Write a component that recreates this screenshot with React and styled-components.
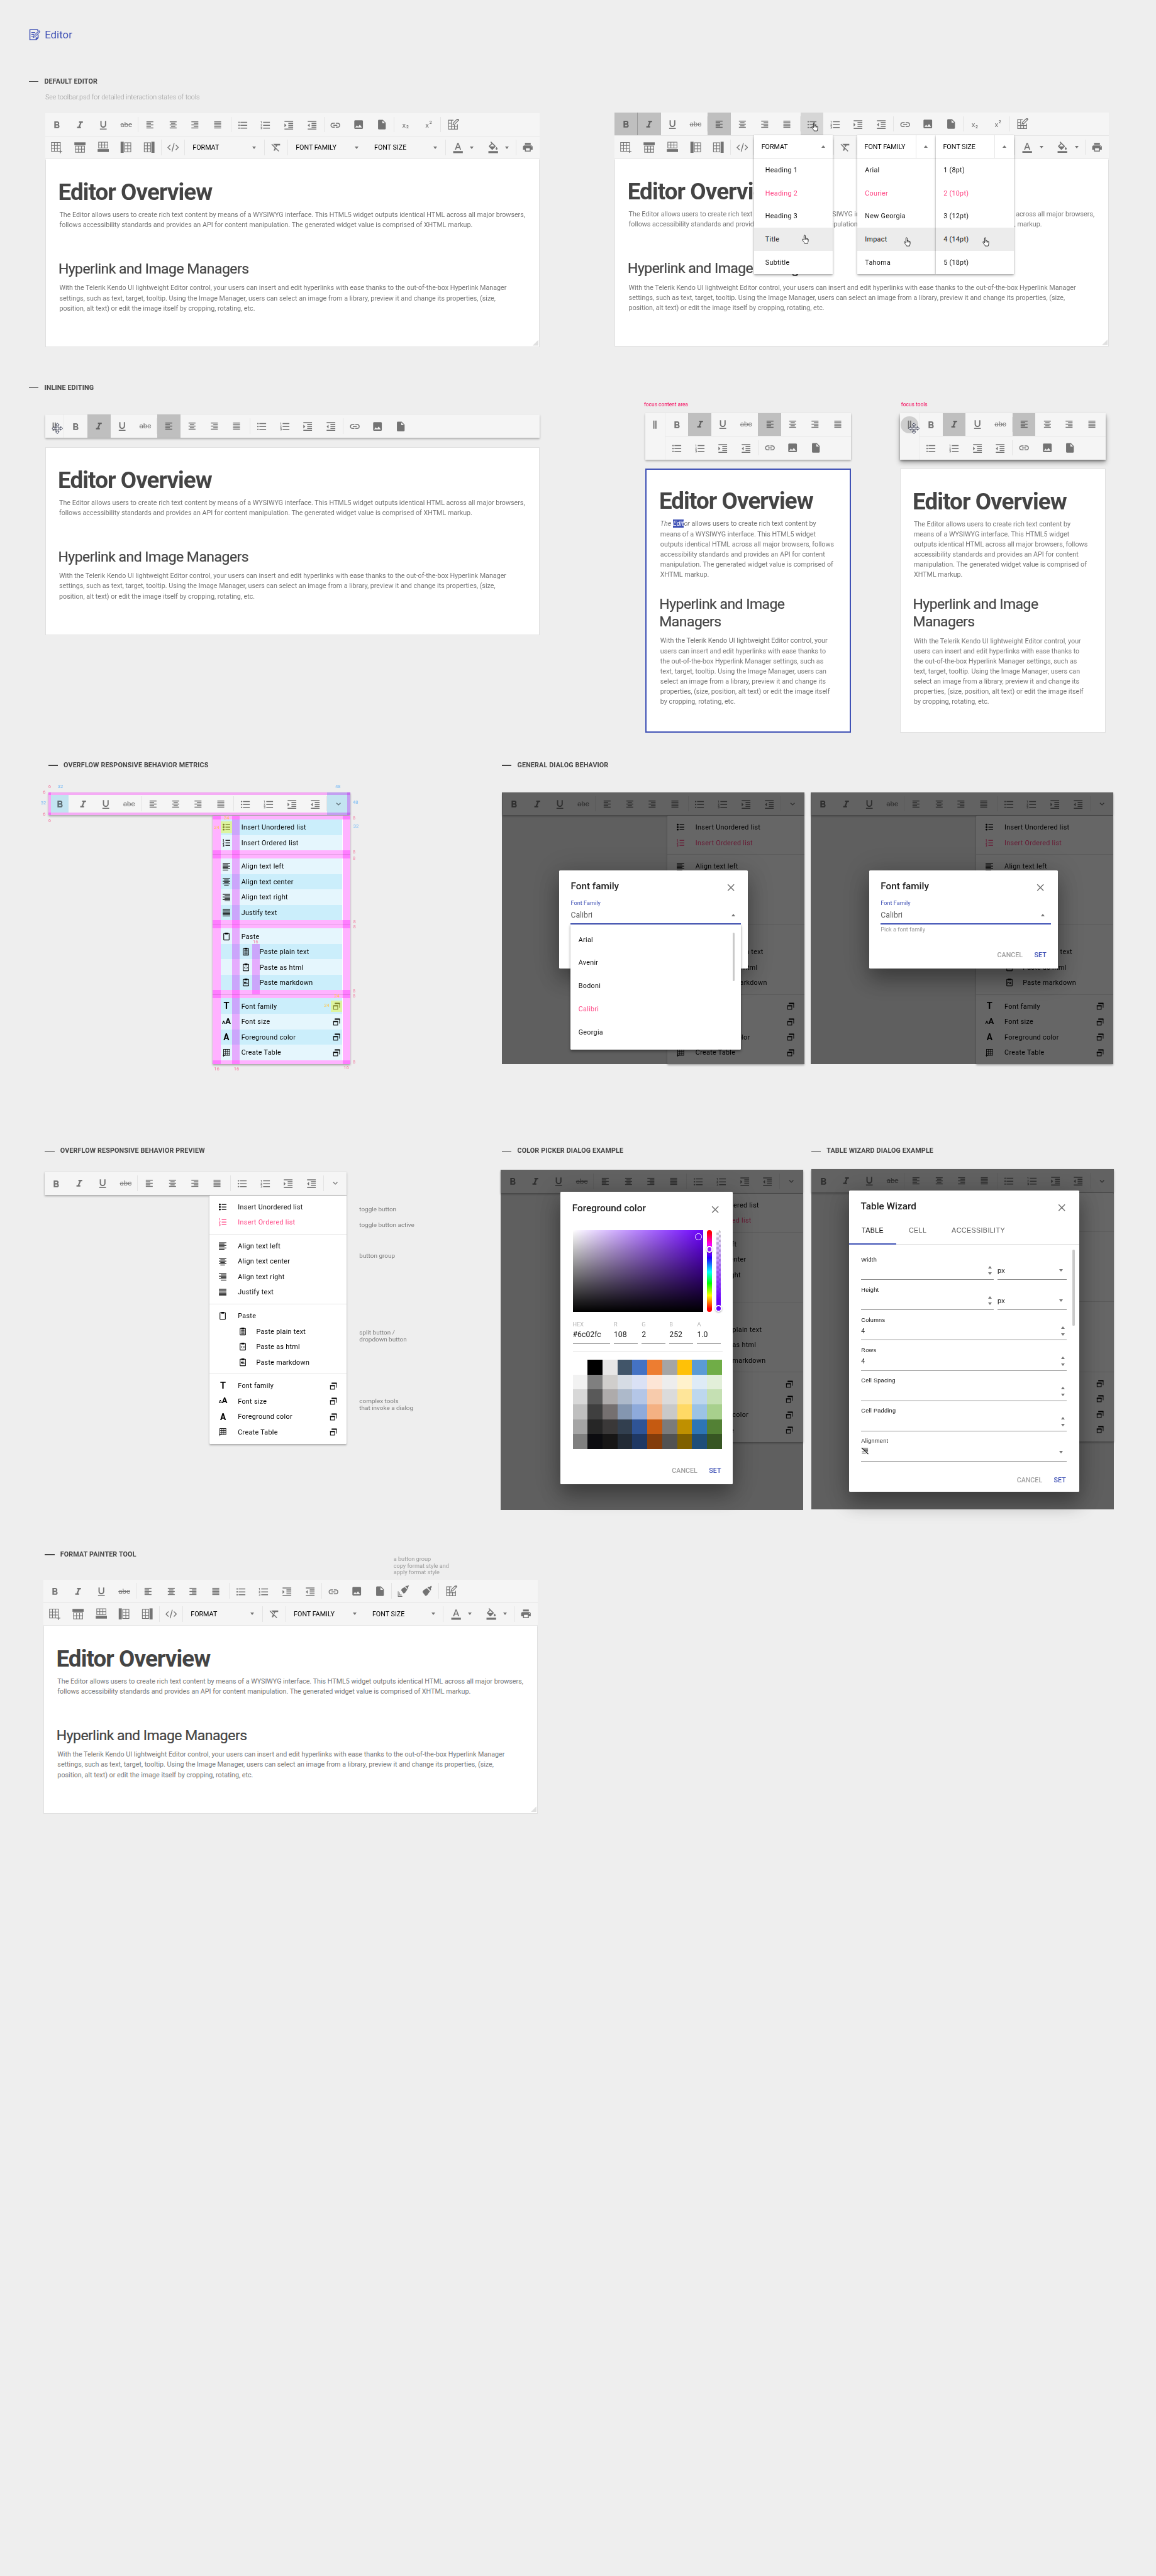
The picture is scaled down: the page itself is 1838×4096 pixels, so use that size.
import React from 'react';
import styled, { createGlobalStyle, css } from 'styled-components';
import {
  MdFormatBold, MdFormatItalic, MdFormatUnderlined, MdFormatListBulleted, MdFormatListNumbered,
  MdFormatIndentIncrease, MdFormatIndentDecrease, MdInsertLink, MdImage, MdInsertDriveFile,
  MdFormatClear, MdFormatColorText, MdFormatColorFill, MdPrint,
} from 'react-icons/md';

const Global = createGlobalStyle`
  body { margin: 0; background: #eeeeee; }
  * { box-sizing: border-box; }
`;

const accent = '#3f51b5';
const pink = '#ff4081';

/* ---------- page frame ---------- */

const Page = styled.div`
  width: 2400px;
  height: 5346px;
  zoom: 0.76583;
  overflow: hidden;
  background: #eeeeee;
  color: #757575;
  font-family: Roboto, "Liberation Sans", sans-serif;
  font-size: 14px;
`;

const Brand = styled.header`
  display: flex;
  align-items: center;
  gap: 9px;
  height: 84px;
  padding: 60px 0 0 60px;
  color: ${accent};
  font-size: 22px;
  line-height: 24px;
`;

const Band = styled.section`
  display: flex;
  align-items: flex-start;
  margin-top: ${p => p.$top}px;
  padding-left: ${p => p.$left}px;
  height: ${p => p.$height}px;
`;

const Column = styled.div`
  flex: none;
  width: ${p => p.$width}px;
  margin-left: ${p => p.$gap || 0}px;
  padding-top: ${p => p.$pad || 0}px;
`;

const Indent = styled.div`
  margin: ${p => p.$top || 0}px 0 0 ${p => p.$left || 0}px;
`;

const Heading = styled.h3`
  display: flex;
  align-items: center;
  gap: 12px;
  height: 18px;
  margin: 0 0 0 ${p => p.$left || 0}px;
  color: #444444;
  font-size: 14px;
  font-weight: 700;
  letter-spacing: 0.2px;
  line-height: 18px;
  white-space: nowrap;
  &::before { content: ""; width: 20px; height: 2px; background: #444444; }
`;

const Hint = styled.p`
  margin: 17px 0 24px 34px;
  color: #9a9a9a;
  font-size: 14px;
  font-weight: 300;
  letter-spacing: -0.1px;
  line-height: 16px;
`;

const FocusLabel = styled.p`
  margin: 0 0 12px ${p => p.$left}px;
  color: #f50057;
  font-size: 11px;
  line-height: 12px;
`;

/* ---------- toolbar ---------- */

const raised = css`box-shadow: 0 2px 4px rgba(0, 0, 0, 0.28), 0 0 2px rgba(0, 0, 0, 0.1);`;

const Bar = styled.div`
  display: flex;
  height: 48px;
  width: ${p => (p.$width ? `${p.$width}px` : 'auto')};
  background: #f5f5f5;
  color: #737373;
  ${p => p.$raised && raised}
  ${p => p.$line && css`border-bottom: 1px solid #e6e6e6;`}
`;

const Group = styled.div`
  display: flex;
  position: relative;
  & + &::before {
    content: "";
    width: 1px;
    height: 32px;
    align-self: center;
    background: #e4e4e4;
  }
`;

const Tool = styled.div`
  position: relative;
  display: flex;
  align-items: center;
  justify-content: center;
  gap: ${p => p.$gap || 0}px;
  width: ${p => p.$width || 48}px;
  padding-top: ${p => p.$drop || 0}px;
  background: ${p => (p.$on ? '#bfbfbf' : p.$hover ? '#d6d6d6' : 'transparent')};
  color: ${p => (p.$on ? '#606060' : 'inherit')};
  ${p => p.$edge && css`border-right: 1px solid #999999;`}
  svg { flex: none; }
`;

const Struck = styled.span`
  font-size: 15px;
  line-height: 18px;
  text-decoration: line-through;
`;

const Script = styled.span`
  display: flex;
  align-items: ${p => (p.$up ? 'flex-start' : 'flex-end')};
  gap: 1px;
  font-size: 15px;
  line-height: 15px;
  b { font-size: 9px; line-height: ${p => (p.$up ? '5px' : '8px')}; font-weight: 700; }
`;

const Picker = styled.div`
  position: relative;
  display: flex;
  align-items: center;
  justify-content: space-between;
  width: ${p => p.$width}px;
  padding: 0 16px;
  color: #000000;
`;

const Triangle = styled.i`
  flex: none;
  width: 0;
  height: 0;
  border-left: ${p => p.$size || 4.5}px solid transparent;
  border-right: ${p => p.$size || 4.5}px solid transparent;
  ${p => (p.$up
    ? css`border-bottom: 5.3px solid #757575;`
    : css`border-top: 5.3px solid #757575;`)}
`;

const Popup = styled.div`
  position: absolute;
  z-index: 3;
  top: -1px;
  left: 0;
  width: ${p => p.$width}px;
  background: #ffffff;
  color: #111111;
  box-shadow: 0 3px 5px rgba(0, 0, 0, 0.3), 0 0 2px rgba(0, 0, 0, 0.25);
`;

const PopupHead = styled.div`
  display: flex;
  height: 48px;
  align-items: center;
  padding-left: 15px;
  border-bottom: 1px solid #dedede;
  color: #000000;
  span { flex: 1; }
`;

const PopupArrow = styled.div`
  display: flex;
  align-items: center;
  justify-content: center;
  width: 41px;
  height: 100%;
  border-left: 1px solid ${p => (p.$split ? '#e8e8e8' : 'transparent')};
`;

const Option = styled.div`
  position: relative;
  display: flex;
  align-items: center;
  height: 48px;
  padding-left: ${p => p.$pad}px;
  background: ${p => (p.$hover ? '#ececec' : 'transparent')};
  color: ${p => (p.$active ? pink : 'inherit')};
  letter-spacing: 0.4px;
`;

const Pointer = styled.span`
  position: absolute;
  z-index: 4;
  left: ${p => p.$x}px;
  top: ${p => p.$y}px;
  line-height: 0;
`;

/* ---------- icons ---------- */

const Svg = ({ size = 24, children, ...rest }) => (
  <svg width={size} height={size} viewBox={`0 0 ${size} ${size}`} fill="none" stroke="currentColor" {...rest}>{children}</svg>
);

const Bars = ({ kind, dx = 0 }) => {
  const rows = [2, 5.2, 8.4, 11.6, 14.8];
  const inset = kind === 'left' ? [0, 5] : kind === 'center' ? [2.8, 2.8] : kind === 'right' ? [5, 0] : [0, 0];
  return (
    <Svg stroke="none" fill="currentColor">
      {rows.map((y, i) => {
        const s = i % 2 ? inset : [0, 0];
        return <rect key={y} x={5 + dx + s[0]} y={y + 1.8} width={14.4 - s[0] - s[1]} height={1.9} />;
      })}
    </Svg>
  );
};

const FineBars = ({ kind }) => {
  const inset = { left: [0, 4], center: [3, 3], right: [4, 0], full: [0, 0] }[kind];
  return (
    <Svg stroke="none" fill="currentColor">
      {[4.6, 7.3, 10, 12.7, 15.4, 18.1].map((y, i) => {
        const s = i % 2 ? inset : [0, 0];
        return <rect key={y} x={4 + s[0]} y={y} width={15.5 - s[0] - s[1]} height={1.4} />;
      })}
    </Svg>
  );
};

const Grid = ({ x, y, w, h, cols, rows }) => (
  <g strokeWidth="1.4">
    <rect x={x} y={y} width={w} height={h} />
    {Array.from({ length: cols - 1 }, (_, i) => <path key={`c${i}`} d={`M${x + (w / cols) * (i + 1)} ${y}v${h}`} />)}
    {Array.from({ length: rows - 1 }, (_, i) => <path key={`r${i}`} d={`M${x} ${y + (h / rows) * (i + 1)}h${w}`} />)}
  </g>
);

const TableAdd = () => (
  <Svg><g><Grid x={1} y={2} w={18.5} h={18.5} cols={3} rows={3} /><path d="M16 20.8h7.5M19.8 17v7.5" stroke="#f5f5f5" strokeWidth="4" /><path d="M15.8 20.8h7.6M19.6 17v7.5" strokeWidth="1.8" /></g></Svg>
);
const RowAbove = () => <Svg><rect x="0.3" y="1.7" width="23.4" height="6" fill="currentColor" stroke="none" /><Grid x={2.4} y={9.4} w={19} h={13} cols={3} rows={2} /></Svg>;
const RowBelow = () => <Svg><Grid x={2.4} y={1.4} w={19} h={12} cols={3} rows={2} /><rect x="0.3" y="15.8" width="23.4" height="6" fill="currentColor" stroke="none" /></Svg>;
const ColLeft = () => <Svg><rect x="1" y="0.5" width="6.4" height="23" fill="currentColor" stroke="none" /><Grid x={9.2} y={2.6} w={13} h={19} cols={2} rows={3} /></Svg>;
const ColRight = () => <Svg><rect x="16.6" y="0.5" width="6.4" height="23" fill="currentColor" stroke="none" /><Grid x={1.8} y={2.6} w={13} h={19} cols={2} rows={3} /></Svg>;
const TableEdit = () => (
  <Svg>
    <path d="M13 2.7H2.7v18.6h18.6V11M2.7 9h7M2.7 15.2h18.6M8.9 2.7v18.6M15.1 13v8.300" strokeWidth="1.5" />
    <path d="M12 12l1-3.600L20.600 .8l2.600 2.600-7.600 7.600z" strokeWidth="1.600" fill="#f5f5f5" />
    <path d="M20.300 -.5l4 4 1-1.200-2.800-3.200z" fill="currentColor" stroke="none" />
  </Svg>
);
const CodeMark = () => <Svg strokeWidth="1.8"><path d="M6.500 7L1.300 12.300l5.200 5.200M17.500 7l5.200 5.300-5.200 5.200M14.300 3.500L9.700 21" /></Svg>;
const Brush = ({ copy }) => (
  <Svg fill="currentColor" stroke="none">
    <path d="M12.500 5.500l6.500 6.500-6 8.500-3.500 1.200L3.500 13.500l2.200-3.800zM14 3.800l1.500-1.200 3 .8L21.200.5l2 2-2.400 3.300.6 3.200-1.300 1.500z" transform={copy ? 'translate(4.500 -1.500) scale(.84)' : undefined} />
    {copy && <path d="M2 12v10h8v1.500H.8V12zM4.500 14.500v4.500h4v1.300H3.200v-5.800z" />}
  </Svg>
);
const Grip = () => <Svg fill="currentColor" stroke="none"><path d="M8.700 3.500h2.400v17H8.700zM13 3.500h2.400v17H13z" /></Svg>;
const Chevron = () => <Svg strokeWidth="1.8"><path d="M7.800 10l4.200 4.200L16.200 10" /></Svg>;
const Cross = () => <Svg stroke="#6f6f6f" strokeWidth="1.900"><path d="M5.500 5.500l13 13M18.500 5.500l-13 13" /></Svg>;

const FineBullets = () => (
  <Svg fill="currentColor" stroke="none">
    {[6.800, 12, 17.200].map(y => <g key={y}><circle cx="5.900" cy={y} r="1.900" /><rect x="9.800" y={y - 0.8} width="9.700" height="1.600" /></g>)}
  </Svg>
);
const FineNumbers = () => (
  <Svg strokeWidth="1.100">
    <path d="M4.600 4.500h1v3.500M4.300 9.700h2.200v1.400L4.500 13.600h2.200M4.300 15.500h2.200v1.900h-1.500m1.500 0v2H4.300" />
    {[6.800, 12, 17.200].map(y => <path key={y} d={`M9.800 ${y}h9.700`} strokeWidth="1.600" />)}
  </Svg>
);
const Clip = ({ inner }) => (
  <Svg strokeWidth="1.400">
    <rect x="6.200" y="5.500" width="11.200" height="13.600" rx="0.6" />
    <rect x="8.800" y="4" width="6" height="3.400" fill="currentColor" stroke="none" />
    {inner === 'text' && <path d="M8.300 9.500h7M8.300 12h7M8.300 14.400h7M8.300 16.800h7" strokeWidth="1.200" />}
    {inner === 'html' && <path d="M10.700 10.500l-2 2.300 2 2.300M13 10.500l2 2.300-2 2.300" strokeWidth="1.200" />}
    {inner === 'md' && <path d="M8.500 15.200v-4.500l1.400 2 1.400-2v4.500M13.900 10.500v4M12.600 13l1.300 1.700 1.300-1.700" strokeWidth="1.200" />}
  </Svg>
);
const GridMark = () => <Svg><rect x="6" y="4.5" width="12.500" height="12.500" strokeWidth="1.200" /><path d="M10.200 4.500V17M14.300 4.500V17M6 8.700h12.500M6 12.800h12.500M4 17.200h5M6 14.500v5.500" strokeWidth="1.100" /></Svg>;
const Windows = () => (
  <Svg><path d="M8.800 5.700h9.400v9.300" strokeWidth="1.300" /><path d="M8.100 4.600h10.800v2.500H8.100z" fill="currentColor" stroke="none" /><rect x="5.700" y="10.600" width="8.600" height="7.600" strokeWidth="1.300" /><path d="M5 9.900h10v2.200H5z" fill="currentColor" stroke="none" /></Svg>
);
const NoAlign = () => <Svg size={16} strokeWidth="1.100"><path d="M2.500 2.500h12M5 5h9.500M7 7.500h7.500M2 10h5M9.500 10h5M2 12.500h8M12 12.500h2.500" /><path d="M1 1.500l14 13" strokeWidth="1.500" /></Svg>;
const Logo = () => (
  <Svg strokeWidth="2">
    <path d="M18 3.500V1.500H2v21h13l4-4v-7" /><path d="M15 22v-3.500h3.500" />
    <path d="M5 7.500h8M5 11.500h5.500M5 15.500h3" strokeWidth="1.800" />
    <path d="M9 18l1.200-4L21 3.700l2 2L12 16.500z" strokeWidth="1.400" />
  </Svg>
);
const Hand = () => (
  <Svg width="14" height="20" viewBox="0 0 16 22" fill="#fff" stroke="#000" strokeWidth="1.200">
    <path d="M5 13V2.400a1.500 1.500 0 0 1 3 0V8.500a1.300 1.300 0 0 1 2.500 0v.8a1.200 1.200 0 0 1 2.300.3v.9a1.100 1.100 0 0 1 2.200.3v4.700c0 2-1.300 3-1.300 5.200H6.500c0-1.800-2-3.200-3.300-5.300L1.300 12c-.7-1.300.9-2.200 1.800-1.200z" />
    <path d="M8 8.500v3.500M10.500 9.500v2.700M12.800 10.500v2" strokeWidth="1" />
  </Svg>
);
const Move = () => (
  <Svg fill="#fff" stroke="#3a3f55" strokeWidth="1.300">
    <path d="M12 1l3.800 4h-2.500v5.700H19V8.200l4 3.800-4 3.800v-2.500h-5.700V19h2.500L12 23l-3.800-4h2.500v-5.700H5v2.500L1 12l4-3.800v2.500h5.700V5H8.200z" />
  </Svg>
);

/* ---------- toolbar pieces ---------- */

const FontTools = ({ on = {}, drop }) => (
  <Group>
    <Tool $drop={drop + 1} $on={on.b} $edge={on.b}><MdFormatBold size={24} /></Tool>
    <Tool $drop={drop} $on={on.i}><MdFormatItalic size={24} /></Tool>
    <Tool $drop={drop}><MdFormatUnderlined size={24} /></Tool>
    <Tool $drop={drop - 1}><Struck>abc</Struck></Tool>
  </Group>
);

const AlignTools = ({ on, drop }) => (
  <Group>
    <Tool $drop={drop} $on={on}><Bars kind="left" /></Tool>
    <Tool $drop={drop}><Bars kind="center" /></Tool>
    <Tool $drop={drop}><Bars kind="right" dx={-2} /></Tool>
    <Tool $drop={drop}><Bars kind="full" dx={-3} /></Tool>
  </Group>
);

const ListTools = ({ hover, drop }) => (
  <Group>
    <Tool $drop={drop} $hover={hover}>
      <MdFormatListBulleted size={24} />
      {hover && <Pointer $x={23} $y={20}><Hand /></Pointer>}
    </Tool>
    <Tool $drop={drop}><MdFormatListNumbered size={24} /></Tool>
    <Tool $drop={drop}><MdFormatIndentIncrease size={24} /></Tool>
    <Tool $drop={drop}><MdFormatIndentDecrease size={24} /></Tool>
  </Group>
);

const InsertTools = ({ drop }) => (
  <Group>
    <Tool $drop={drop}><MdInsertLink size={24} /></Tool>
    <Tool $drop={drop - 2}><MdImage size={24} /></Tool>
    <Tool $drop={drop - 3}><MdInsertDriveFile size={24} /></Tool>
  </Group>
);

const Handle = styled.div`
  position: relative;
  display: flex;
  align-items: center;
  justify-content: center;
  width: ${p => p.$width || 40}px;
  border-right: 1px solid #ebebeb;
  color: #737373;
  ${p => p.$tall && css`align-items: flex-start; padding-top: 12px;`}
`;

const Halo = styled.span`
  position: absolute;
  left: 2px;
  top: 6px;
  width: 36px;
  height: 36px;
  border-radius: 50%;
  background: #cecece;
`;

const GripOver = styled.span`
  position: relative;
  line-height: 0;
`;

/* ---------- editable content ---------- */

const Sheet = styled.div`
  position: relative;
  height: ${p => p.$height || 390}px;
  padding: ${p => 41 - (p.$focus ? 2.7 : 1)}px 0 0 ${p => (p.$focus ? 28.3 : 28)}px;
  background: #ffffff;
  border: ${p => (p.$focus ? `2.7px solid ${accent}` : '1px solid #e0e0e0')};
  ${p => p.$joined && css`border-top-color: #ffffff;`}
`;

const H1 = styled.h1`
  margin: 0 0 8px -2.500px;
  color: #444444;
  font-size: 48px;
  font-weight: 700;
  letter-spacing: -1.2px;
  line-height: 56px;
  white-space: nowrap;
`;

const H2 = styled.h2`
  margin: ${p => p.$top}px 0 12px -2px;
  color: #444444;
  font-size: 30px;
  font-weight: 400;
  -webkit-text-stroke: 0.3px #444444;
  letter-spacing: -0.68px;
  line-height: 36px;
  white-space: nowrap;
`;

const Copy = styled.p`
  margin: 0;
  color: #757575;
  font-size: 14px;
  line-height: 21px;
  white-space: pre-line;
`;

const Selected = styled.span`
  background: ${accent};
  color: #ffffff;
`;

const Corner = styled.span`
  position: absolute;
  right: 1px;
  bottom: 2px;
  width: 12px;
  height: 12px;
  background: #e0e0e0;
  clip-path: polygon(100% 0, 100% 100%, 0 100%);
`;

const wideIntro = `The Editor allows users to create rich text content by means of a WYSIWYG interface. This HTML5 widget outputs identical HTML across all major browsers,
follows accessibility standards and provides an API for content manipulation. The generated widget value is comprised of XHTML markup.`;
const wideBody = `With the Telerik Kendo UI lightweight Editor control, your users can insert and edit hyperlinks with ease thanks to the out-of-the-box Hyperlink Manager
settings, such as text, target, tooltip. Using the Image Manager, users can select an image from a library, preview it and change its properties, (size,
position, alt text) or edit the image itself by cropping, rotating, etc.`;
const slimIntro = `means of a WYSIWYG interface. This HTML5 widget
outputs identical HTML across all major browsers, follows
accessibility standards and provides an API for content
manipulation. The generated widget value is comprised of
XHTML markup.`;
const slimBody = `With the Telerik Kendo UI lightweight Editor control, your
users can insert and edit hyperlinks with ease thanks to
the out-of-the-box Hyperlink Manager settings, such as
text, target, tooltip. Using the Image Manager, users can
select an image from a library, preview it and change its
properties, (size, position, alt text) or edit the image itself
by cropping, rotating, etc.`;

const WideSheet = ({ joined }) => (
  <Sheet $joined={joined}>
    <H1>Editor Overview</H1>
    <Copy>{wideIntro}</Copy>
    <H2 $top={62}>Hyperlink and Image Managers</H2>
    <Copy>{wideBody}</Copy>
    {joined && <Corner />}
  </Sheet>
);

const SlimSheet = ({ focus }) => (
  <Sheet $height={548} $focus={focus}>
    <H1>Editor Overview</H1>
    <Copy>
      {focus ? <><em>The <Selected>Edit</Selected>or</em> allows</> : 'The Editor allows'} users to create rich text content by{'\n'}
      {slimIntro}
    </Copy>
    <H2 $top={33}>Hyperlink and Image<br />Managers</H2>
    <Copy>{slimBody}</Copy>
  </Sheet>
);

/* ---------- full editor ---------- */

const Dropdown = ({ label, width, open, options, split, pad = 16, pointer = [106, 16] }) => (
  <Picker $width={width}>
    {!open && <>{label}<Triangle /></>}
    {open && (
      <Popup $width={width - 0.5}>
        <PopupHead><span>{label}</span><PopupArrow $split={split}><Triangle $up /></PopupArrow></PopupHead>
        {options.map((o, i) => (
          <Option key={o} $pad={pad} $active={i === 1} $hover={i === 3}>
            {o}
            {i === 3 && <Pointer $x={pointer[0]} $y={pointer[1]}><Hand /></Pointer>}
          </Option>
        ))}
      </Popup>
    )}
  </Picker>
);

const Frame = styled.div`
  width: 1026px;
`;

const Editor = ({ open, painter }) => (
  <Frame>
    <Bar $line>
      <FontTools drop={3} on={open ? { b: true, i: true } : {}} />
      <AlignTools drop={3} on={open} />
      <ListTools drop={3} hover={open} />
      <InsertTools drop={3} />
      {painter ? (
        <Group>
          <Tool><Brush copy /></Tool>
          <Tool><Brush /></Tool>
        </Group>
      ) : (
        <Group>
          <Tool $drop={5}><Script>x<b>2</b></Script></Tool>
          <Tool $drop={5}><Script $up>x<b>2</b></Script></Tool>
        </Group>
      )}
      <Group><Tool $width={52}><TableEdit /></Tool></Group>
    </Bar>
    <Bar $line>
      <Group>
        <Tool><TableAdd /></Tool>
        <Tool><RowAbove /></Tool>
        <Tool><RowBelow /></Tool>
        <Tool><ColLeft /></Tool>
        <Tool><ColRight /></Tool>
      </Group>
      <Group><Tool><CodeMark /></Tool></Group>
      <Group><Dropdown label="FORMAT" width={164} open={open} pad={23} pointer={[99, 14]} options={['Heading 1', 'Heading 2', 'Heading 3', 'Title', 'Subtitle']} /></Group>
      <Group><Tool><MdFormatClear size={24} /></Tool></Group>
      <Group>
        <Dropdown label="FONT FAMILY" width={163} open={open} split pointer={[97, 19]} options={['Arial', 'Courier', 'New Georgia', 'Impact', 'Tahoma']} />
        <Dropdown label="FONT SIZE" width={163} open={open} split pointer={[97, 19]} options={['1 (8pt)', '2 (10pt)', '3 (12pt)', '4 (14pt)', '5 (18pt)']} />
      </Group>
      <Group>
        <Tool $width={73} $gap={13}><MdFormatColorText size={24} /><Triangle /></Tool>
        <Tool $width={73} $gap={13}><MdFormatColorFill size={24} /><Triangle /></Tool>
      </Group>
      <Group><Tool><MdPrint size={24} /></Tool></Group>
    </Bar>
    <WideSheet joined />
  </Frame>
);

/* ---------- inline toolbars ---------- */

const SlimBar = styled.div`
  display: flex;
  width: 427px;
  height: 96px;
  margin-bottom: 19px;
  background: #f5f5f5;
  ${p => (p.$lifted
    ? css`box-shadow: 0 6px 10px rgba(0, 0, 0, 0.35), 0 2px 4px rgba(0, 0, 0, 0.3);`
    : raised)}
`;

const SlimRows = styled.div`
  flex: 1;
  min-width: 0;
`;

const InlineSlim = ({ lifted }) => (
  <SlimBar $lifted={lifted}>
    <Handle $width={41} $tall>
      {lifted && <Halo />}
      <GripOver><Grip /></GripOver>
      {lifted && <Pointer $x={17} $y={19}><Move /></Pointer>}
    </Handle>
    <SlimRows>
      <Bar $line><FontTools drop={2} on={{ i: true }} /><AlignTools drop={2} on /></Bar>
      <Bar><ListTools drop={2} /><InsertTools drop={0} /></Bar>
    </SlimRows>
  </SlimBar>
);

/* ---------- overflow toolbar and menu ---------- */

const MenuBox = styled.div`
  width: 285px;
  margin: 1px 0 0 ${p => p.$left || 342}px;
  background: #ffffff;
  border-radius: 2px;
  color: #000000;
  ${raised}
`;

const MenuGroup = styled.div`
  padding: 8px 0;
  & + & { border-top: 1px solid #e4e4e4; }
`;

const MenuItem = styled.div`
  display: flex;
  align-items: center;
  height: 32px;
  padding: 0 16px 0 ${p => (p.$sub ? 57 : 16)}px;
  gap: ${p => (p.$sub ? 16 : 19)}px;
  color: ${p => (p.$active ? pink : 'inherit')};
  letter-spacing: 0.42px;
  span { flex: 1; }
`;

const Letter = styled.b`
  display: flex;
  align-items: baseline;
  justify-content: center;
  width: 24px;
  font-size: ${p => p.$size || 19}px;
  line-height: 24px;
  letter-spacing: 0;
  small { font-size: 10px; }
`;

const menu = [
  [['Insert Unordered list', <FineBullets />], ['Insert Ordered list', <FineNumbers />, 'toggle']],
  [['Align text left', <FineBars kind="left" />], ['Align text center', <FineBars kind="center" />], ['Align text right', <FineBars kind="right" />], ['Justify text', <FineBars kind="full" />]],
  [['Paste', <Clip />], ['Paste plain text', <Clip inner="text" />, 'sub'], ['Paste as html', <Clip inner="html" />, 'sub'], ['Paste markdown', <Clip inner="md" />, 'sub']],
  [['Font family', <Letter>T</Letter>, 'dialog'], ['Font size', <Letter $size={17}><small>A</small>A</Letter>, 'dialog'], ['Foreground color', <Letter $size={18}>A</Letter>, 'dialog'], ['Create Table', <GridMark />, 'dialog']],
];

const Overflow = ({ active = true }) => (
  <>
    <Bar $raised $width={627}>
      <FontTools drop={2} />
      <AlignTools drop={2} />
      <ListTools drop={2} />
      <Group><Tool><Chevron /></Tool></Group>
    </Bar>
    <MenuBox>
      {menu.map((group, g) => (
        <MenuGroup key={g}>
          {group.map(([text, icon, kind]) => (
            <MenuItem key={text} $sub={kind === 'sub'} $active={active && kind === 'toggle'}>
              {icon}<span>{text}</span>{kind === 'dialog' && <Windows />}
            </MenuItem>
          ))}
        </MenuGroup>
      ))}
    </MenuBox>
  </>
);

/* ---------- measurement overlay ---------- */

const Measured = styled.div`
  position: relative;
  width: 627px;
`;

const tints = { gap: '#ffb2ff', area: '#cbeefb', soft: '#e5f6fd', mark: 'rgba(240, 250, 70, 0.5)' };

const Tint = styled.span`
  position: absolute;
  left: ${p => p.$x}px;
  top: ${p => p.$y}px;
  width: ${p => p.$w}px;
  height: ${p => p.$h}px;
  background: ${p => tints[p.$tone]};
  mix-blend-mode: ${p => (p.$tone === 'mark' ? 'normal' : 'multiply')};
`;

const Measure = styled.span`
  position: absolute;
  left: ${p => p.$x}px;
  top: ${p => p.$y}px;
  transform: translate(-50%, -50%);
  color: ${p => p.$color};
  font-size: 10px;
  line-height: 10px;
`;

const rowTops = [57, 89, 138, 170, 202, 234, 283, 315, 347, 379, 428, 460, 492, 524];
const rowTones = ['area', 'soft', 'soft', 'area', 'soft', 'area', 'soft', 'area', 'soft', 'area', 'area', 'soft', 'area', 'soft'];
const gapTops = [49, 121, 130, 266, 275, 411, 420, 556];
const P = '#f27ba0';
const B = '#74b9f5';
const Y = '#ffc64a';
const measures = [
  [3, -12, '6', P], [25.500, -12, '32', B], [601.500, -12, '48', B], [-8, 1, '6', P], [-10, 22.500, '32', B], [-8, 45.500, '6', P],
  [638, 21.500, '48', B], [3, 59.500, '6', P], [370, 53.500, '24', Y], [349.500, 74, '24', Y], [635, 53.500, '8', P], [639, 71.500, '32', B],
  [635, 124.500, '8', P], [635, 137.500, '8', P], [636, 269.500, '8', P], [636, 280, '8', P], [430.500, 310.500, '16', P],
  [635, 412.500, '8', P], [635, 424, '8', P], [599, 424, '24', Y], [578, 443.500, '24', Y], [635, 560.500, '8', P],
  [350, 575.500, '16', P], [391, 575.500, '16', P], [619, 572.500, '16', P],
];

const Metrics = () => (
  <Measured>
    <Overflow active={false} />
    <Tint $tone="gap" $x={0} $y={0} $w={627} $h={6} />
    <Tint $tone="gap" $x={0} $y={42} $w={627} $h={6} />
    <Tint $tone="gap" $x={0} $y={0} $w={6} $h={48} />
    <Tint $tone="gap" $x={621} $y={0} $w={6} $h={48} />
    <Tint $tone="area" $x={6} $y={6} $w={36} $h={36} />
    <Tint $tone="area" $x={579} $y={0} $w={48} $h={48} />
    {rowTops.map((y, i) => <Tint key={y} $tone={rowTones[i]} $x={358} $y={y} $w={253} $h={32} />)}
    {gapTops.map(y => <Tint key={y} $tone="gap" $x={342} $y={y} $w={285} $h={8} />)}
    <Tint $tone="gap" $x={342} $y={49} $w={16} $h={515} />
    <Tint $tone="gap" $x={382} $y={49} $w={16} $h={515} />
    <Tint $tone="gap" $x={611} $y={49} $w={16} $h={515} />
    <Tint $tone="gap" $x={423} $y={315} $w={16} $h={104} />
    <Tint $tone="mark" $x={358} $y={61} $w={24} $h={24} />
    <Tint $tone="mark" $x={587} $y={432} $w={24} $h={24} />
    {measures.map(([x, y, t, c]) => <Measure key={`${x}-${y}`} $x={x} $y={y} $color={c}>{t}</Measure>)}
  </Measured>
);

/* ---------- dialogs ---------- */

const Stage = styled.div`
  position: relative;
  width: 628px;
  height: ${p => p.$height}px;
`;

const Backdrop = styled.div`
  position: absolute;
  inset: 0;
  background: rgba(0, 0, 0, 0.6);
`;

const Dialog = styled.div`
  position: absolute;
  display: flex;
  flex-direction: column;
  left: ${p => p.$x}px;
  top: ${p => p.$y}px;
  width: ${p => p.$width}px;
  height: ${p => p.$height}px;
  padding: ${p => p.$pad || 21}px 24px ${p => p.$foot || 19}px;
  background: #ffffff;
  border-radius: 2px;
  box-shadow: 0 24px 40px rgba(0, 0, 0, 0.26), 0 6px 56px rgba(0, 0, 0, 0.2);
`;

const DialogHead = styled.div`
  display: flex;
  justify-content: space-between;
  height: 24px;
  color: #212121;
  font-size: 20px;
  font-weight: 500;
  line-height: 24px;
  svg { margin-top: 3px; }
`;

const FieldLabel = styled.div`
  margin-top: 17px;
  color: ${accent};
  font-size: 12px;
  line-height: 14px;
`;

const FieldValue = styled.div`
  position: relative;
  display: flex;
  align-items: center;
  justify-content: space-between;
  width: 353px;
  height: 36px;
  margin-right: -9px;
  padding: 0 12px 0 0;
  border-bottom: 2.7px solid ${accent};
  color: #616161;
  font-size: 16px;
`;

const Helper = styled.div`
  margin-top: 5px;
  color: #9a9a9a;
  font-size: 12px;
  line-height: 14px;
`;

const Actions = styled.div`
  display: flex;
  justify-content: flex-end;
  gap: 24px;
  margin-top: auto;
  padding-right: ${p => p.$right || 0}px;
  color: #9e9e9e;
  font-weight: 500;
  line-height: 16px;
  b { color: ${accent}; font-weight: 500; }
`;

const List = styled.div`
  position: absolute;
  left: 0;
  top: 36px;
  width: 353px;
  height: 261px;
  padding-top: 8px;
  overflow: hidden;
  background: #ffffff;
  border-radius: 0 0 2px 2px;
  color: #111111;
  font-size: 14px;
  box-shadow: 0 3px 6px rgba(0, 0, 0, 0.35), 0 0 3px rgba(0, 0, 0, 0.15);
`;

const Scroller = styled.span`
  position: absolute;
  right: ${p => p.$right}px;
  top: ${p => p.$top}px;
  width: 4px;
  height: ${p => p.$height}px;
  border-radius: 2px;
  background: #cacaca;
`;

const FontDialog = ({ x, open }) => (
  <Dialog $x={x} $y={162} $width={392} $height={204}>
    <DialogHead>Font family<Cross /></DialogHead>
    <FieldLabel>Font Family</FieldLabel>
    <FieldValue>
      Calibri<Triangle $up />
      {open && (
        <List>
          {['Arial', 'Avenir', 'Bodoni', 'Calibri', 'Georgia'].map(f => <Option key={f} $pad={16} $active={f === 'Calibri'}>{f}</Option>)}
          <Scroller $right={13} $top={18} $height={100} />
        </List>
      )}
    </FieldValue>
    {!open && <Helper>Pick a font family</Helper>}
    {!open && <Actions $right={-4}><span>CANCEL</span><b>SET</b></Actions>}
  </Dialog>
);

/* color picker */

const Spectrum = styled.div`
  display: flex;
  gap: 8px;
  height: 170px;
  margin: 33px 0 0 1px;
`;

const Field = styled.div`
  position: relative;
  width: 272px;
  background: linear-gradient(to top, #000000, transparent), linear-gradient(to right, #ffffff, #6c02fc);
`;

const Track = styled.div`
  position: relative;
  width: 10px;
  margin-right: ${p => p.$gap || 0}px;
  border-radius: 5px;
  background: ${p => p.$fill};
`;

const Knob = styled.span`
  position: absolute;
  left: ${p => p.$x}px;
  top: ${p => p.$y}px;
  width: 14px;
  height: 14px;
  border-radius: 50%;
  border: ${p => (p.$fill ? 3 : 1)}px solid #ffffff;
  background: ${p => p.$fill || 'transparent'};
  ${p => p.$fill && css`box-shadow: 0 1px 3px rgba(0, 0, 0, 0.35);`}
`;

const Channels = styled.div`
  display: flex;
  gap: 8px;
  margin: 19px 0 0 1px;
`;

const Channel = styled.div`
  width: ${p => p.$width}px;
  height: 47px;
  border-bottom: 1px solid #949494;
  color: #212121;
  font-size: 16px;
  line-height: 20px;
  small { display: block; margin-bottom: 5px; color: #b5b5b5; font-size: 12px; line-height: 14px; }
`;

const Rule = styled.div`
  height: 1px;
  width: 312px;
  margin: 16px 0 16px 1px;
  background: #dedede;
`;

const Palette = styled.div`
  display: grid;
  grid-template-columns: repeat(10, 31px);
  grid-auto-rows: 31px;
  margin-left: 1px;
`;

const Swatch = styled.span`
  background: ${p => p.$color};
`;

const palette = (
  'ffffff 000000 e7e6e6 415569 4472c4 ed7d31 a5a5a5 ffc107 5b9bd5 70ad47 ' +
  'f2f2f2 7f7f7f d0cecc d6dce4 dae1f5 fde5d6 ededed fff2cc deebf6 e2efd9 ' +
  'd8d8d8 595959 aeabab adb9ca b4c6e7 f7cbac dbdbdb fee599 bdd7ee c5e0b3 ' +
  'bfbfbf 3f3f3f 757070 8496b0 8eaadb f4b183 c9c9c9 ffd965 9cc3e5 a8d08d ' +
  'a5a5a5 262626 3a3838 323f4f 2f5496 c55a11 7b7b7b bf9000 2e75b5 538135 ' +
  '7f7f7f 0c0c10 171616 222a35 1f3864 833c0b 525252 7f6000 1e4e79 375623'
).split(' ');

const hue = 'linear-gradient(to bottom, #ff0000 3%, #ff00ff 18%, #2000ff 34%, #00ffff 51%, #00ff00 65%, #ffff00 80%, #ff0000 96%)';
const alpha = 'linear-gradient(to bottom, rgba(108, 2, 252, 0), #6c02fc 85%), repeating-conic-gradient(#cccccc 0 25%, #ffffff 0 50%) 0 0 / 10px 10px';

const ColorDialog = () => (
  <Dialog $x={125} $y={46} $width={357} $height={607} $pad={22}>
    <DialogHead>Foreground color<Cross /></DialogHead>
    <Spectrum>
      <Field><Knob $x={254} $y={7} /></Field>
      <Track $fill={hue} $gap={1}><Knob $x={-2} $y={33} $fill="#9a1cff" /></Track>
      <Track $fill={alpha}><Knob $x={-2} $y={156} $fill="#6c02fc" /></Track>
    </Spectrum>
    <Channels>
      <Channel $width={78}><small>HEX</small>#6c02fc</Channel>
      <Channel $width={50}><small>R</small>108</Channel>
      <Channel $width={50}><small>G</small>2</Channel>
      <Channel $width={50}><small>B</small>252</Channel>
      <Channel $width={50}><small>A</small>1.0</Channel>
    </Channels>
    <Rule />
    <Palette>{palette.map((c, i) => <Swatch key={i} $color={`#${c}`} />)}</Palette>
    <Actions><span>CANCEL</span><b>SET</b></Actions>
  </Dialog>
);

/* table wizard */

const Tabs = styled.div`
  display: flex;
  height: 52px;
  margin: 15px -24px 0;
  border-bottom: 1px solid #dddddd;
  font-family: "Liberation Sans", Arial, sans-serif;
  letter-spacing: 0.5px;
`;

const Tab = styled.div`
  display: flex;
  align-items: center;
  height: 52px;
  padding: 0 26px 5px;
  color: ${p => (p.$on ? '#000000' : '#5c5c5c')};
  border-bottom: 2.7px solid ${p => (p.$on ? accent : 'transparent')};
`;

const Form = styled.div`
  display: flex;
  flex-direction: column;
  padding: 25px 0 0 1px;
  width: 428px;
  color: #111111;
  font-family: "Liberation Sans", Arial, sans-serif;
`;

const Line = styled.div`
  display: flex;
  gap: 8px;
  height: 62.7px;
`;

const Input = styled.div`
  display: flex;
  flex-direction: column;
  flex: ${p => (p.$width ? `0 0 ${p.$width}px` : 1)};
  height: 49px;
  border-bottom: 1px solid #8d8d8d;
  label { height: 14px; font-size: 12px; letter-spacing: 0.33px; line-height: 14px; }
`;

const InputBody = styled.div`
  display: flex;
  flex: 1;
  align-items: center;
  justify-content: space-between;
  padding: 0 ${p => (p.$select ? 8 : 4)}px 3px 0;
  letter-spacing: 0.4px;
`;

const Spinner = styled.span`
  display: flex;
  flex-direction: column;
  gap: 8px;
`;

const Number = ({ label, value, width }) => (
  <Input $width={width}>
    <label>{label}</label>
    <InputBody><span>{value}</span><Spinner><Triangle $up $size={4} /><Triangle $size={4} /></Spinner></InputBody>
  </Input>
);

const Select = ({ label, value, width }) => (
  <Input $width={width}>
    <label>{label}</label>
    <InputBody $select><span>{value}</span><Triangle $size={4} /></InputBody>
  </Input>
);

const WizardDialog = () => (
  <Dialog $x={79} $y={44} $width={478} $height={626} $pad={21} $foot={16}>
    <DialogHead>Table Wizard<Cross /></DialogHead>
    <Tabs><Tab $on>TABLE</Tab><Tab>CELL</Tab><Tab>ACCESSIBILITY</Tab></Tabs>
    <Form>
      <Line><Number label="Width" width={275} /><Select label="" value="px" /></Line>
      <Line><Number label="Height" width={275} /><Select label="" value="px" /></Line>
      <Line><Number label="Columns" value="4" /></Line>
      <Line><Number label="Rows" value="4" /></Line>
      <Line><Number label="Cell Spacing" /></Line>
      <Line><Number label="Cell Padding" /></Line>
      <Line><Select label="Alignment" value={<NoAlign />} /></Line>
    </Form>
    <Scroller $right={10} $top={123} $height={158} />
    <Actions $right={4}><span>CANCEL</span><b>SET</b></Actions>
  </Dialog>
);

/* ---------- side notes ---------- */

const Notes = styled.div`
  display: flex;
  flex-direction: column;
  margin-left: 26px;
  color: #7c7c7c;
  font-size: 13px;
  line-height: 14px;
`;

const Note = styled.p`
  margin: ${p => p.$top}px 0 0;
  white-space: pre;
`;

const PainterHead = styled.div`
  display: flex;
  height: 61px;
`;

const PainterNote = styled.p`
  position: absolute;
  margin: 11px 0 0 727px;
  color: #9a9a9a;
  font-size: 12px;
  line-height: 14.300px;
  white-space: pre;
`;

const Split = styled.div`
  display: flex;
`;

export default function App() {
  return (
    <Page>
      <Global />
      <Brand><Logo />Editor</Brand>

      <Band $top={76} $left={60} $height={561}>
        <Column $width={1060}>
          <Heading>DEFAULT EDITOR</Heading>
          <Hint>See toolbar.psd for detailed interaction states of tools</Hint>
          <Indent $left={34}><Editor /></Indent>
        </Column>
        <Column $width={1026} $gap={156} $pad={74}><Editor open /></Column>
      </Band>

      <Band $top={75} $left={60} $height={725}>
        <Column $width={1060}>
          <Heading>INLINE EDITING</Heading>
          <Indent $left={33.500} $top={47}>
            <Bar $raised>
              <Handle><Grip /><Pointer $x={13} $y={17}><Move /></Pointer></Handle>
              <FontTools drop={2} on={{ i: true }} />
              <AlignTools drop={2} on />
              <ListTools drop={2} />
              <InsertTools drop={2} />
            </Bar>
          </Indent>
          <Indent $left={33.500} $top={20}><WideSheet /></Indent>
        </Column>
        <Column $width={427} $gap={220} $pad={38}>
          <FocusLabel $left={-3}>focus content area</FocusLabel>
          <InlineSlim />
          <SlimSheet focus />
        </Column>
        <Column $width={427} $gap={101} $pad={38}>
          <FocusLabel $left={3}>focus tools</FocusLabel>
          <InlineSlim lifted />
          <SlimSheet />
        </Column>
      </Band>

      <Band $top={59} $left={100} $height={629}>
        <Column $width={942}>
          <Heading>OVERFLOW RESPONSIVE BEHAVIOR METRICS</Heading>
          <Indent $top={47}><Metrics /></Indent>
        </Column>
        <Column $width={628}>
          <Heading>GENERAL DIALOG BEHAVIOR</Heading>
          <Indent $top={47}>
            <Stage $height={564}><Indent $left={1}><Overflow /></Indent><Backdrop /><FontDialog x={119} open /></Stage>
          </Indent>
        </Column>
        <Column $width={628} $gap={13.500} $pad={65}>
          <Stage $height={564}><Indent $left={1}><Overflow /></Indent><Backdrop /><FontDialog x={121} /></Stage>
        </Column>
      </Band>

      <Band $top={172} $left={93} $height={754}>
        <Column $width={946}>
          <Heading>OVERFLOW RESPONSIVE BEHAVIOR PREVIEW</Heading>
          <Indent $top={34}>
            <Split>
              <div><Overflow /></div>
              <Notes>
                <Note $top={72}>toggle button</Note>
                <Note $top={18}>toggle button active</Note>
                <Note $top={50}>button group</Note>
                <Note $top={146}>{'split button /\ndropdown button'}</Note>
                <Note $top={114}>{'complex tools\nthat invoke a dialog'}</Note>
              </Notes>
            </Split>
          </Indent>
        </Column>
        <Column $width={628}>
          <Heading $left={3}>COLOR PICKER DIALOG EXAMPLE</Heading>
          <Indent $top={30}>
            <Stage $height={706}><Indent $left={1}><Overflow /></Indent><Backdrop /><ColorDialog /></Stage>
          </Indent>
        </Column>
        <Column $width={628} $gap={17}>
          <Heading>TABLE WIZARD DIALOG EXAMPLE</Heading>
          <Indent $top={29}>
            <Stage $height={706}><Indent $left={1}><Overflow /></Indent><Backdrop /><WizardDialog /></Stage>
          </Indent>
        </Column>
      </Band>

      <Band $top={84} $left={90} $height={548}>
        <Column $width={1026}>
          <PainterHead>
            <Heading $left={3}>FORMAT PAINTER TOOL</Heading>
            <PainterNote>{'a button group\ncopy format style and\napply format style'}</PainterNote>
          </PainterHead>
          <Editor painter />
        </Column>
      </Band>
    </Page>
  );
}
